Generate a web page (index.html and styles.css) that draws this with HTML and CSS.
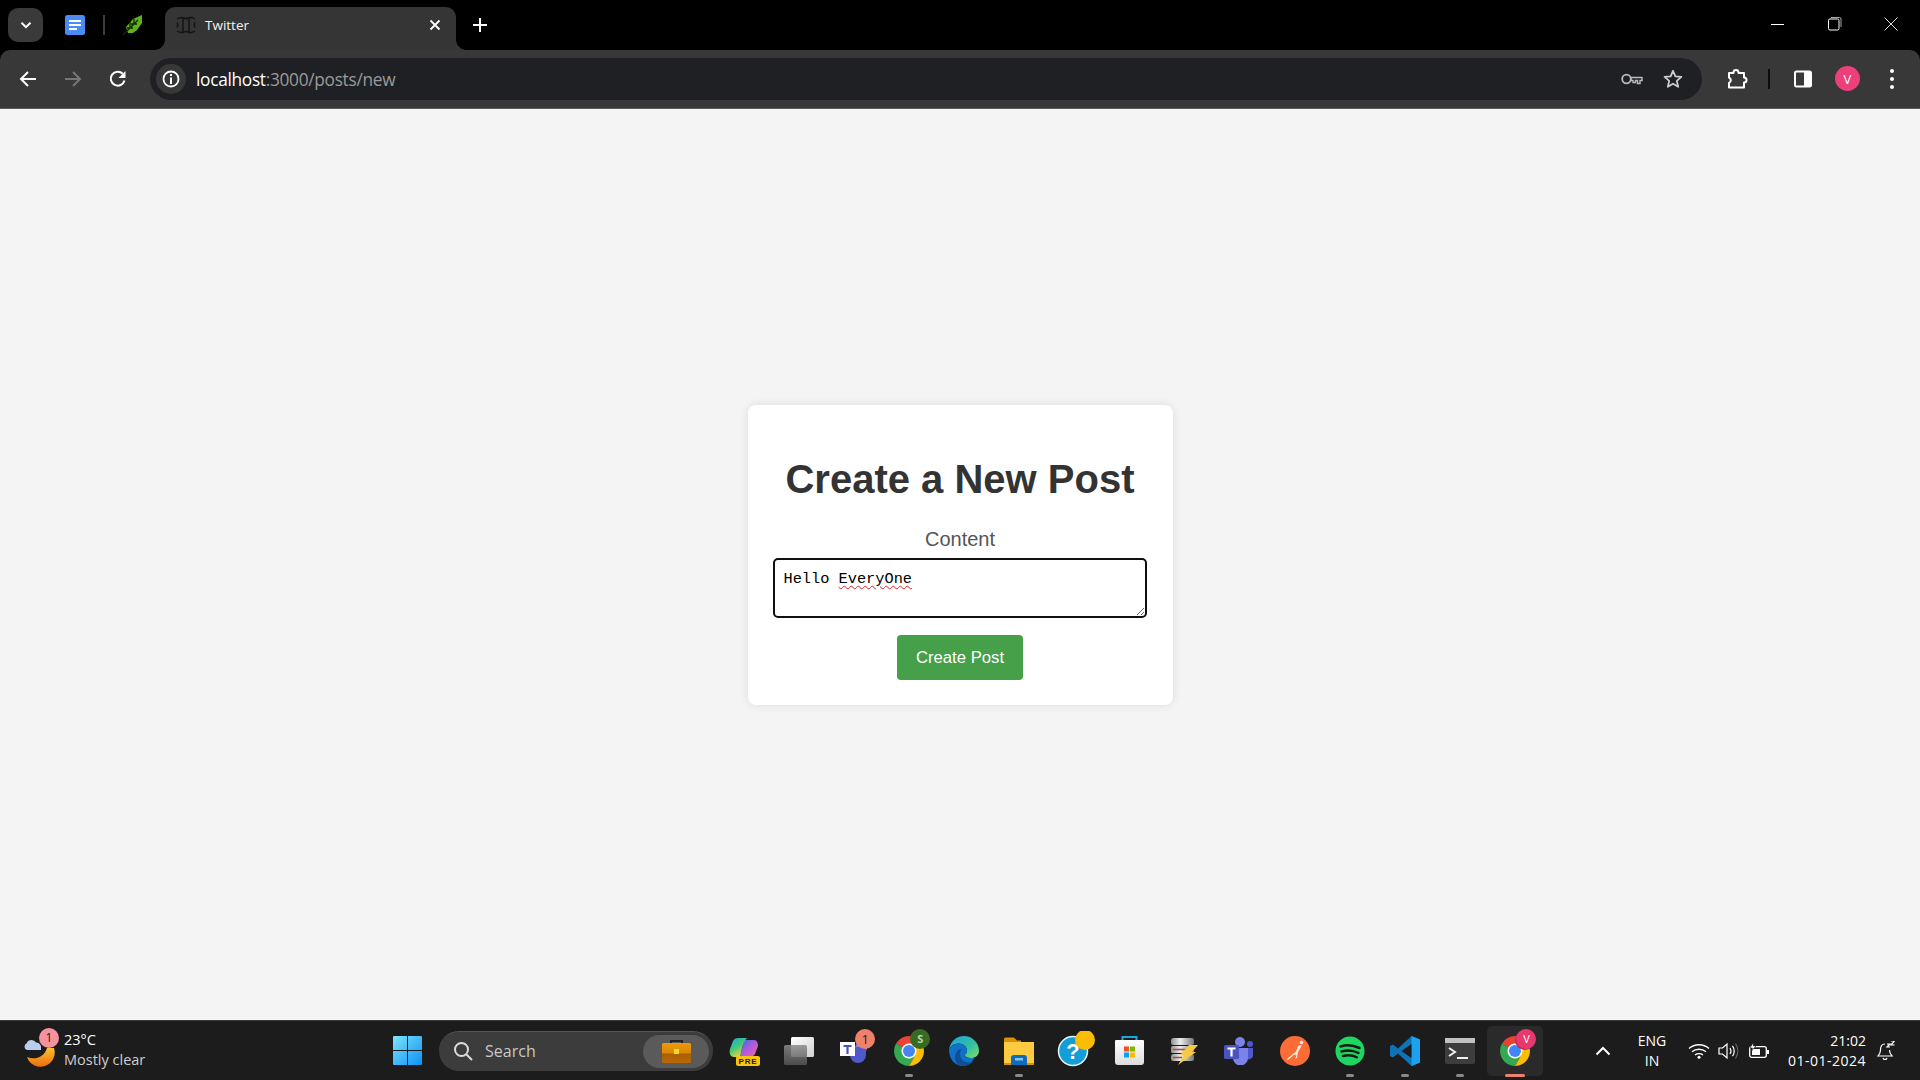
FILE: index.html
```html
<!DOCTYPE html>
<html lang="en">
<head>
  <meta charset="UTF-8">
  <title>Twitter</title>
  <link rel="stylesheet" href="styles.css">
</head>
<body>
  <svg class="defs" width="0" height="0">
    <symbol id="chrome" viewBox="0 0 48 48">
      <circle cx="24" cy="24" r="11" fill="#fff"/>
      <path fill="#ea4335" d="M6.68 14A20 20 0 0 1 41.32 14H24a10 10 0 0 0-8.66 5z"/>
      <path fill="#34a853" d="M6.68 14A20 20 0 0 0 24 44l8.66-15a10 10 0 0 1-17.32-10z"/>
      <path fill="#fbbc04" d="M41.32 14A20 20 0 0 1 24 44l8.66-15A10 10 0 0 0 24 14z"/>
      <circle cx="24" cy="24" r="8" fill="#4285f4"/>
    </symbol>
  </svg>

  <header class="tabstrip">
    <button class="tab-search">
      <svg width="14" height="14" viewBox="0 0 14 14"><path d="M2.5 4.800 7 9.200l4.500-4.400" fill="none" stroke="#fff" stroke-width="2"/></svg>
    </button>
    <div class="pinned">
      <svg width="20" height="20" viewBox="0 0 20 20">
        <rect width="20" height="20" rx="2.500" fill="#4c8bf5"/>
        <path d="M4 5h12v2H4zM4 9h12v2H4zM4 13h8v2H4z" fill="#fff"/>
      </svg>
    </div>
    <span class="pin-sep"></span>
    <div class="pinned pinned-leaf">
      <svg width="20" height="20" viewBox="0 0 20 20">
        <path d="M3 12 10 4l9-4v8l-5 7-4 3H5z" fill="#5fb21a"/>
        <path d="M0 20 15 5M7 7v6M11 4v5M4 13h6M8 9h6" stroke="#12290a" stroke-width="1.300" fill="none"/>
      </svg>
    </div>
    <div class="tab">
      <svg class="favicon" width="20" height="18" viewBox="0 0 20 18">
        <path d="M1 3c3-2 5-2 7-1 1 .5 3 .5 4 0 2-1 4-1 7 1M1 15c3 2 5 2 7 1 1-.5 3-.5 4 0 2 1 4 1 7-1M1 6.500c1 1 1 4 0 5M19 6.500c-1 1-1 4 0 5M7 2v14M13 2v14" fill="none" stroke="#141414" stroke-width="1.500"/>
      </svg>
      <span class="tab-title">Twitter</span>
      <svg class="tab-close" width="12" height="12" viewBox="0 0 12 12"><path d="M1.500 1.500l9 9m0-9l-9 9" stroke="#fff" stroke-width="1.800"/></svg>
    </div>
    <svg class="new-tab" width="14" height="14" viewBox="0 0 14 14"><path d="M7 0v14M0 7h14" stroke="#fff" stroke-width="2"/></svg>
    <div class="window-controls">
      <svg width="14" height="14" viewBox="0 0 14 14"><path d="M0 7.500h13" stroke="#fff"/></svg>
      <svg width="14" height="14" viewBox="0 0 14 14"><rect x=".5" y="2" width="10.500" height="11" rx="1.500" fill="none" stroke="#fff"/><path d="M3 .5h8.500a1.500 1.500 0 0 1 1.500 1.500v8" fill="none" stroke="#aaa"/></svg>
      <svg width="14" height="14" viewBox="0 0 14 14"><path d="M.5.500l13 13m0-13l-13 13" stroke="#ddd"/></svg>
    </div>
  </header>

  <nav class="toolbar">
    <svg class="nav-btn" width="18" height="18" viewBox="0 0 18 18"><path d="M17 9H2.500M9 2 2 9l7 7" fill="none" stroke="#fff" stroke-width="2"/></svg>
    <svg class="nav-btn" width="18" height="18" viewBox="0 0 18 18"><path d="M1 9h14.500M9 2l7 7-7 7" fill="none" stroke="#777" stroke-width="2"/></svg>
    <svg class="nav-btn" width="18" height="18" viewBox="0 0 18 18"><path d="M15.500 10.500A7 7 0 1 1 13.800 3.800" fill="none" stroke="#fff" stroke-width="2"/><path d="M16.500 1v7h-7z" fill="#fff"/></svg>
    <div class="omnibox">
      <span class="site-info">
        <svg width="18" height="18" viewBox="0 0 18 18"><circle cx="9" cy="9" r="7.500" fill="none" stroke="#fff" stroke-width="1.800"/><path d="M8 4h2v2H8zM8 7.500h2V14H8z" fill="#fff"/></svg>
      </span>
      <span class="url"><b>localhost</b>:3000/posts/new</span>
      <svg class="key" width="22" height="14" viewBox="0 0 22 14"><circle cx="5.500" cy="7" r="4.300" fill="none" stroke="#bbb" stroke-width="1.800"/><path d="M10 5.500h11v3h-2v3h-2.500v-3h-2v2H12v-2h-2z" fill="none" stroke="#bbb" stroke-width="1.400"/></svg>
      <svg class="star" width="20" height="20" viewBox="0 0 20 20"><path d="M10 1.800l2.400 5.600 6 .5-4.600 4 1.400 5.900L10 14.700l-5.200 3.100 1.400-5.900-4.600-4 6-.5z" fill="none" stroke="#ccc" stroke-width="1.800" stroke-linejoin="round"/></svg>
    </div>
    <svg class="ext" width="22" height="22" viewBox="0 0 22 22"><path d="M2 5.500h4.500a2.200 2.200 0 0 1 0-.5 2.500 2.500 0 0 1 5 0v.5H17V10a2.500 2.500 0 0 1 0 5v5H2v-4.500a3 3 0 0 0 0-5.500z" transform="translate(1 -.5)" fill="none" stroke="#fff" stroke-width="2" stroke-linejoin="round"/></svg>
    <span class="tool-sep"></span>
    <svg class="panel" width="18" height="18" viewBox="0 0 18 18"><rect x="1" y="1.500" width="16" height="15" rx="1.500" fill="#383838" stroke="#fff" stroke-width="2"/><rect x="10" y="2" width="7" height="14" fill="#fff"/></svg>
    <span class="avatar">V</span>
    <span class="menu-dots"><i></i><i></i><i></i></span>
  </nav>

  <main class="page">
    <form class="post-form">
      <h1>Create a New Post</h1>
      <label class="field-label">Content</label>
      <div class="content-input">Hello <span class="misspelt">EveryOne</span></div>
      <button class="submit-btn" type="button">Create Post</button>
    </form>
  </main>

  <footer class="taskbar">
    <div class="weather">
      <div class="weather-icon">
        <svg width="32" height="34" viewBox="0 0 32 34">
          <defs><linearGradient id="moon" x1="0" y1="0" x2="0" y2="1"><stop offset="0" stop-color="#fbc02d"/><stop offset="1" stop-color="#ee6c12"/></linearGradient></defs>
          <path d="M30 14A14 14 0 0 1 3 23c7 3 17 1 20-9z" fill="url(#moon)"/>
          <path d="M3 16a3.500 3.500 0 0 1-.5-6.500C4 5 10 5 12 8.500c3 0 4.500 2 5 4v3.500z" fill="#b9cdf0"/>
        </svg>
        <span class="weather-badge">1</span>
      </div>
      <div class="weather-text">
        <span class="temp">23°C</span>
        <span class="cond">Mostly clear</span>
      </div>
    </div>

    <div class="tile">
      <svg width="29" height="29" viewBox="0 0 29 29">
        <defs><linearGradient id="winlogo" x1="0" y1="0" x2="1" y2="1"><stop offset="0" stop-color="#7fe5fb"/><stop offset="1" stop-color="#0c8ff5"/></linearGradient></defs>
        <path d="M1 0h13v14H0V1a1 1 0 0 1 1-1zM15 0h13a1 1 0 0 1 1 1v13H15zM0 15h14v14H1a1 1 0 0 1-1-1zM15 15h14v13a1 1 0 0 1-1 1H15z" fill="url(#winlogo)"/>
      </svg>
    </div>

    <div class="search-box">
      <svg width="20" height="20" viewBox="0 0 20 20"><circle cx="8.500" cy="8.500" r="6.500" fill="none" stroke="#ddd" stroke-width="2"/><path d="M13.500 13.500l5.500 5.500" stroke="#ddd" stroke-width="2"/></svg>
      <span class="search-label">Search</span>
      <span class="search-pill">
        <svg width="29" height="24" viewBox="0 0 29 24">
          <defs><linearGradient id="case" x1="0" y1="0" x2="0" y2="1"><stop offset="0" stop-color="#f09a08"/><stop offset=".5" stop-color="#d98606"/><stop offset=".55" stop-color="#a85e04"/><stop offset="1" stop-color="#b96a06"/></linearGradient></defs>
          <path d="M9 4V2h11v2" fill="none" stroke="#222" stroke-width="2"/>
          <rect y="4" width="29" height="20" rx="1.500" fill="url(#case)"/>
          <rect x="12" y="10" width="5" height="5" fill="#f7d92a"/>
        </svg>
      </span>
    </div>

    <div class="task-icons">
      <div class="tile">
        <svg width="32" height="30" viewBox="0 0 32 30">
          <defs>
            <linearGradient id="cop1" x1="0" y1="0" x2=".6" y2="1"><stop offset="0" stop-color="#1fa9e8"/><stop offset=".5" stop-color="#3fc77d"/><stop offset="1" stop-color="#f5d63d"/></linearGradient>
            <linearGradient id="cop2" x1="0" y1="0" x2="1" y2="1"><stop offset="0" stop-color="#2b6fe0"/><stop offset=".5" stop-color="#b25ae0"/><stop offset="1" stop-color="#f0689a"/></linearGradient>
          </defs>
          <path d="M16 4h10c3 0 4 3 4 6l-3 8c-1 2-3 3-6 3h-9z" fill="url(#cop2)"/>
          <path d="M10 2h9c-3 3-4 6-5 10l-2 9H6c-4 0-5-4-4-8L5 5c1-2 3-3 5-3z" fill="url(#cop1)"/>
          <rect x="8" y="20" width="24" height="10" rx="2" fill="#f9c513"/>
          <text x="20" y="28" class="pre-text">PRE</text>
        </svg>
      </div>
      <div class="tile">
        <svg width="30" height="28" viewBox="0 0 30 28">
          <defs>
            <linearGradient id="tv" x1="0" y1="0" x2="1" y2="1"><stop offset="0" stop-color="#fff"/><stop offset="1" stop-color="#d0d0d0"/></linearGradient>
            <linearGradient id="tv2" x1="0" y1="0" x2="0" y2="1"><stop offset="0" stop-color="#8a8a8a"/><stop offset="1" stop-color="#555"/></linearGradient>
          </defs>
          <rect x="7" y="0" width="23" height="20" rx="1.500" fill="url(#tv)"/>
          <rect x="0" y="8" width="23" height="20" rx="1.500" fill="url(#tv2)" fill-opacity=".85"/>
        </svg>
      </div>
      <div class="tile">
        <svg width="28" height="24" viewBox="0 0 28 24">
          <circle cx="21" cy="9" r="6" fill="#7b83eb"/>
          <path d="M10 8h16v8a8 8 0 0 1-16 0z" fill="#5059c9"/>
          <rect y="3" width="15" height="14" fill="#fff"/>
          <path d="M3.500 6h8v2H8.600v7H6.400V8H3.500z" fill="#4b53bc"/>
        </svg>
        <span class="badge badge-teams">1</span>
      </div>
      <div class="tile">
        <svg width="36" height="36"><use href="#chrome"/></svg>
        <span class="badge badge-chrome">S</span>
        <span class="running"></span>
      </div>
      <div class="tile">
        <svg width="30" height="30" viewBox="0 0 30 30">
          <defs>
            <linearGradient id="edge1" x1="0" y1="0" x2="1" y2="1"><stop offset="0" stop-color="#1ba2dd"/><stop offset=".6" stop-color="#35c1a0"/><stop offset="1" stop-color="#7fe05a"/></linearGradient>
          </defs>
          <path d="M15 0a15 15 0 0 1 15 15c0 4.500-4 7-8 7-3 0-6-1-6-3 0-1 2-1.500 2-4.500 0-4-4-7-8-7C6 7.500 1.500 9.500 0 14 1 6 7 0 15 0z" fill="url(#edge1)"/>
          <path d="M0 14c1.500-4.500 6-6.500 10-6.500 4 0 8 3 8 7 0 3-2 3.500-2 4.500 0 2 3 3 6 3 2 0 3-.500 4-1-3 6-7 9-12 9C6 30 0 23 0 14z" fill="#1171c6"/>
          <path d="M13 30C7 29 5 23 6.500 18c1-3 3.500-5 6.500-5.500-3 3-3 10 2.500 13 3 1.500 7 1.500 9-.5-3 3.500-7 5-11.500 5z" fill="#0f4f96"/>
        </svg>
      </div>
      <div class="tile">
        <svg width="30" height="30" viewBox="0 0 30 30">
          <path d="M0 3a1.500 1.500 0 0 1 1.500-1.500H10l3 3h4v4H0z" fill="#d99300"/>
          <path d="M0 6h30v21.500a1.500 1.500 0 0 1-1.500 1.500h-27A1.500 1.500 0 0 1 0 27.500z" fill="#fccb42"/>
          <path d="M0 27h30v.5a1.500 1.500 0 0 1-1.500 1.500h-27A1.500 1.500 0 0 1 0 27.500z" fill="#d99300"/>
          <path d="M7 29v-7a3 3 0 0 1 3-3h10a3 3 0 0 1 3 3v7z" fill="#0f6cbd"/>
          <rect x="11" y="22" width="8" height="2.500" fill="#7fc4f2"/>
        </svg>
        <span class="running"></span>
      </div>
      <div class="tile">
        <svg width="42" height="40" viewBox="0 0 42 40">
          <circle cx="20" cy="20" r="14.500" fill="#139ed8" stroke="#e9f6fb" stroke-width="1.500"/>
          <text x="20" y="28" class="help-text">?</text>
          <circle cx="32" cy="9" r="10" fill="#fbbc04"/>
        </svg>
      </div>
      <div class="tile">
        <svg width="29" height="29" viewBox="0 0 29 29">
          <defs><linearGradient id="bag" x1="0" y1="0" x2="0" y2="1"><stop offset="0" stop-color="#fff"/><stop offset="1" stop-color="#dcdcdc"/></linearGradient></defs>
          <path d="M7.500 5V1h14v4" fill="none" stroke="#1aa5e5" stroke-width="2"/>
          <path d="M1 4h27a1 1 0 0 1 1 1v21a3 3 0 0 1-3 3H3a3 3 0 0 1-3-3V5a1 1 0 0 1 1-1z" fill="url(#bag)"/>
          <rect x="9" y="10.500" width="5" height="5" fill="#f25022"/>
          <rect x="15" y="10.500" width="5" height="5" fill="#7fba00"/>
          <rect x="9" y="16.500" width="5" height="5" fill="#00a4ef"/>
          <rect x="15" y="16.500" width="5" height="5" fill="#ffb900"/>
        </svg>
      </div>
      <div class="tile">
        <svg width="28" height="28" viewBox="0 0 28 28">
          <defs><linearGradient id="drum" x1="0" y1="0" x2="1" y2="0"><stop offset="0" stop-color="#8f8f8f"/><stop offset=".4" stop-color="#eee"/><stop offset="1" stop-color="#777"/></linearGradient></defs>
          <rect x="1" y="1" width="23" height="7" rx="2.500" fill="url(#drum)"/>
          <rect x="1" y="9" width="23" height="7" rx="1.500" fill="url(#drum)"/>
          <rect x="1" y="17" width="23" height="7" rx="2.500" fill="url(#drum)"/>
          <path d="M3 12.500h14M3 20.500h9" stroke="#b5443c" stroke-width="1.500"/>
          <path d="M19 8h9l-6 7h4L8 28l6-10h-4z" fill="#f6c945"/>
        </svg>
      </div>
      <div class="tile">
        <svg width="30" height="28" viewBox="0 0 30 28">
          <circle cx="16" cy="5" r="5" fill="#7b83eb"/>
          <circle cx="26" cy="7" r="3" fill="#5059c9"/>
          <path d="M22 11h7v8a5 5 0 0 1-7 3z" fill="#5059c9"/>
          <path d="M9 11h15v10a7.500 7.500 0 0 1-15 0z" fill="#7b83eb"/>
          <rect y="8" width="15" height="14" rx="1.500" fill="#4b53bc"/>
          <path d="M3.500 10.500h8v2H8.600v7H6.400v-7H3.500z" fill="#fff"/>
        </svg>
      </div>
      <div class="tile">
        <svg width="30" height="30" viewBox="0 0 30 30">
          <circle cx="15" cy="15" r="15" fill="#fc6c36"/>
          <circle cx="21.500" cy="6.500" r="1.800" fill="#fbe6dc"/>
          <path d="M20.500 9c-1.500 0-2.500 1-3 2.500l-1.500 4-8.500 7-1 1.500 2-.5 6-5 2 1-1.500 3.500 2-1 1-6 3-5c.8-1 1-2-.5-2z" fill="#fbe6dc"/>
        </svg>
      </div>
      <div class="tile">
        <svg width="30" height="30" viewBox="0 0 30 30">
          <circle cx="15" cy="15" r="14.500" fill="#1ed760"/>
          <path d="M5.500 10.500c6-1.800 13-1.300 19 1.500M6.500 15.500c5-1.500 12-1 17 1.500M8 20c4.500-1.200 10-.700 14 1.300" fill="none" stroke="#0f1a12" stroke-width="2.500" stroke-linecap="round"/>
        </svg>
        <span class="running"></span>
      </div>
      <div class="tile">
        <svg width="30" height="30" viewBox="0 0 30 30">
          <path d="M21.500 0 30 3.500v23L21.500 30 8 17.500 3 21.500 0 20v-10l3-1.500 5 4z" fill="#0e73b8"/>
          <path d="M21.500 0 30 3.500v23L21.500 30z" fill="#1ba1ee"/>
          <path d="M21.500 8 11.500 15l10 7z" fill="#1c1c1c"/>
        </svg>
        <span class="running"></span>
      </div>
      <div class="tile">
        <svg width="30" height="26" viewBox="0 0 30 26">
          <rect width="30" height="26" rx="2" fill="#3d3d3d"/>
          <rect width="30" height="5" fill="#c2c2c2"/>
          <path d="M4 10l6 4-6 4" fill="none" stroke="#eee" stroke-width="2"/>
          <path d="M12 20h11" stroke="#eee" stroke-width="2"/>
        </svg>
        <span class="running"></span>
      </div>
      <div class="tile tile-active">
        <svg width="36" height="36"><use href="#chrome"/></svg>
        <span class="badge badge-user">V</span>
        <span class="running running-active"></span>
      </div>
    </div>

    <div class="tray">
      <svg class="tray-chevron" width="16" height="10" viewBox="0 0 16 10"><path d="M1.500 8.500 8 2l6.500 6.500" fill="none" stroke="#fff" stroke-width="2"/></svg>
      <div class="tray-lang"><span>ENG</span><span>IN</span></div>
      <svg class="tray-wifi" width="22" height="16" viewBox="0 0 22 16"><path d="M1 5.500c5.500-5 14.500-5 20 0M4 8.800c3.800-3.400 10.200-3.400 14 0M7 12c2.200-1.800 5.800-1.800 8 0" fill="none" stroke="#fff" stroke-width="1.300"/><circle cx="11" cy="14.300" r="1.500" fill="#fff"/></svg>
      <svg class="tray-vol" width="22" height="18" viewBox="0 0 22 18"><path d="M1 6h3.500L9 2v14l-4.500-4H1z" fill="none" stroke="#fff" stroke-width="1.200"/><path d="M12 6c1.200 1.800 1.200 4.200 0 6M14.500 3.800c2 3 2 7.400 0 10.400" fill="none" stroke="#fff" stroke-width="1.200"/><path d="M17.500 1.500c3 4.500 3 10.500 0 15" fill="none" stroke="#666" stroke-width="1.200"/></svg>
      <svg class="tray-batt" width="20" height="16" viewBox="0 0 20 16"><rect x=".7" y="3.700" width="16.600" height="10.600" rx="2" fill="none" stroke="#fff" stroke-width="1.300"/><rect x="18" y="7" width="2" height="4" fill="#fff"/><path d="M3 12V6h8v6z" fill="#fff"/><path d="M4 0 1 5h2.500l-1 3L7 3H4.500z" fill="#fff" stroke="#1c1c1c" stroke-width=".6"/></svg>
      <div class="tray-clock"><span>21:02</span><span class="date">01-01-2024</span></div>
      <svg class="tray-bell" width="18" height="20" viewBox="0 0 18 20"><path d="M8 3C4.500 3 3.500 6 3.500 9c0 3-1 4.500-2.500 6h14c-1.500-1.500-2.500-3-2.500-6M6 17c.5 2 3.500 2 4 0" fill="none" stroke="#fff" stroke-width="1.200"/><path d="M10 3h3l-3 3h3M14 0h3.500L14 4h3.500" fill="none" stroke="#fff" stroke-width="1.200"/></svg>
    </div>
  </footer>
</body>
</html>
```

FILE: styles.css
```css
* {
  box-sizing: border-box;
}

html, body {
  height: 100%;
}

body {
  margin: 0;
  display: flex;
  flex-direction: column;
  height: 1080px;
  overflow: hidden;
  background: #000;
  font-family: 'Liberation Sans', Arial, sans-serif;
}

.defs {
  position: absolute;
}

/* browser chrome */
.tabstrip {
  height: 50px;
  flex: none;
  display: flex;
  align-items: flex-end;
  background: #000;
  color: #fff;
}

.tab-search {
  width: 35px;
  height: 34px;
  margin: 0 0 8px 8px;
  padding: 0;
  border: 0;
  border-radius: 10px;
  background: #3a3a3a;
  display: flex;
  align-items: center;
  justify-content: center;
}

.pinned {
  width: 20px;
  height: 20px;
  margin-bottom: 15px;
}

.tab-search + .pinned {
  margin-left: 22px;
}

.pin-sep {
  width: 2px;
  height: 20px;
  margin: 0 18px 15px 18px;
  background: #3a3a3a;
}

.tab {
  width: 291px;
  height: 43px;
  margin-left: 22px;
  padding: 0 15px 7px 11px;
  border-radius: 10px 10px 0 0;
  background: #353535;
  display: flex;
  align-items: center;
  position: relative;
}

.tab::before,
.tab::after {
  content: "";
  position: absolute;
  bottom: 0;
  width: 10px;
  height: 10px;
  background: radial-gradient(circle at 0 0, #000 9.500px, #353535 10px);
}

.tab::before {
  left: -10px;
}

.tab::after {
  right: -10px;
  background: radial-gradient(circle at 100% 0, #000 9.500px, #353535 10px);
}

.favicon {
  flex: none;
}

.tab-title {
  margin-left: 9px;
  flex: 1;
  font: 13.500px 'Open Sans', sans-serif;
  color: #f2f2f2;
}

.new-tab {
  margin: 0 0 18px 17px;
}

.window-controls {
  margin-left: auto;
  height: 50px;
  padding: 0 22px 3px 0;
  display: flex;
  align-items: center;
  gap: 42.500px;
}

.toolbar {
  height: 59px;
  flex: none;
  padding: 0 18px 1px 19px;
  display: flex;
  align-items: center;
  background: #383838;
  border-bottom: 1px solid #5c5c5c;
  border-radius: 10px 10px 0 0;
}

.nav-btn {
  margin-right: 27px;
  flex: none;
}

.nav-btn:nth-of-type(3) {
  margin-right: 23px;
}

.omnibox {
  width: 1552px;
  height: 42px;
  flex: none;
  padding: 0 19px 0 6px;
  border-radius: 21px;
  background: #1f2023;
  display: flex;
  align-items: center;
}

.site-info {
  width: 30px;
  height: 30px;
  border-radius: 50%;
  background: #383838;
  display: flex;
  align-items: center;
  justify-content: center;
}

.url {
  margin-left: 10px;
  padding-top: 2px;
  flex: 1;
  font: 17.300px 'Open Sans', sans-serif;
  letter-spacing: -0.3px;
  color: #9a9a9a;
}

.url b {
  font-weight: 400;
  color: #fff;
}

.star {
  margin-left: 20px;
}

.ext {
  margin-left: 24px;
}

.tool-sep {
  width: 2px;
  height: 20px;
  margin: 0 24px 0 20px;
  background: #0c0c0c;
}

.avatar {
  width: 25px;
  height: 25px;
  margin-left: 23px;
  border-radius: 50%;
  background: #ec407a;
  color: #fff;
  font: 13px 'Open Sans', sans-serif;
  display: flex;
  align-items: center;
  justify-content: center;
}

.menu-dots {
  margin-left: 30px;
  display: flex;
  flex-direction: column;
  gap: 4px;
}

.menu-dots i {
  width: 4px;
  height: 4px;
  border-radius: 50%;
  background: #fff;
}

/* page */
.page {
  flex: 1;
  padding-bottom: 19px;
  background: #f4f4f4;
  display: flex;
  align-items: center;
  justify-content: center;
}

.post-form {
  width: 425px;
  height: 300px;
  padding: 25px;
  border-radius: 8px;
  background: #fff;
  box-shadow: 0 0 10px rgba(0, 0, 0, 0.1);
  text-align: center;
}

h1 {
  margin: 26px 0 26px;
  font-size: 40px;
  line-height: 46px;
  color: #333;
}

.field-label {
  display: block;
  margin-bottom: 7px;
  font-size: 20px;
  line-height: 23px;
  color: #555;
}

.content-input {
  width: 374px;
  height: 60px;
  padding: 11px 9px;
  border: 2px solid #101010;
  border-radius: 5px;
  font: 15.300px/17px 'Liberation Mono', monospace;
  color: #000;
  text-align: left;
  overflow: auto;
  resize: both;
}

.misspelt {
  text-decoration: underline wavy #e8202a 1px;
  text-underline-offset: 2px;
}

.submit-btn {
  width: 126px;
  height: 45px;
  margin: 17px auto 0;
  display: block;
  border: 0;
  border-radius: 4px;
  background: #45a049;
  color: #fff;
  font: 16.700px 'Liberation Sans', Arial, sans-serif;
}

/* windows taskbar */
.taskbar {
  height: 60px;
  flex: none;
  display: flex;
  align-items: center;
  background: #1c1c1c;
  border-top: 1px solid #3a3a3a;
  color: #fff;
  font-family: 'Open Sans', sans-serif;
}

.weather {
  width: 380px;
  padding-left: 24px;
  display: flex;
  align-items: center;
}

.weather-icon {
  width: 32px;
  height: 34px;
  position: relative;
}

.weather-badge {
  position: absolute;
  top: -6px;
  right: -3px;
  width: 20px;
  height: 20px;
  border-radius: 50%;
  background: #f4929e;
  color: #1c1c1c;
  font-size: 12px;
  line-height: 20px;
  text-align: center;
}

.weather-text {
  margin-left: 8px;
  margin-top: -2px;
  display: flex;
  flex-direction: column;
  font-size: 14.500px;
  line-height: 20px;
}

.cond {
  color: #cfcfcf;
}

.tile {
  width: 55.100px;
  height: 50px;
  flex: none;
  display: flex;
  align-items: center;
  justify-content: center;
  position: relative;
}

.search-box {
  width: 274px;
  height: 40px;
  margin-left: 4px;
  padding: 0 4px 0 14px;
  flex: none;
  border-radius: 20px;
  background: #3c3c3c;
  border-top: 1px solid #565656;
  display: flex;
  align-items: center;
}

.search-label {
  margin-left: 12px;
  flex: 1;
  font-size: 16px;
  color: #c8c8c8;
}

.search-pill {
  width: 66px;
  height: 33px;
  border-radius: 17px;
  background: #5a5a5a;
  display: flex;
  align-items: center;
  justify-content: center;
}

.task-icons {
  margin-left: 3px;
  display: flex;
}

.badge {
  position: absolute;
  width: 20px;
  height: 20px;
  top: 3px;
  left: 29px;
  border-radius: 50%;
  font-size: 13px;
  line-height: 20px;
  text-align: center;
}

.badge-teams {
  background: #f0806a;
  color: #222;
}

.badge-chrome {
  background: #3a6b25;
  color: #b9d8a8;
  font-weight: 700;
  font-size: 11px;
}

.badge-user {
  background: #e8396f;
  color: #fff;
  font-size: 11px;
  box-shadow: -1px 1px 0 #b52a55;
}

.running {
  position: absolute;
  left: 50%;
  bottom: -1px;
  width: 8px;
  height: 3px;
  margin-left: -4px;
  border-radius: 2px;
  background: #8a8a8a;
}

.tile-active {
  border-radius: 5px;
  background: #2a2a2a;
}

.running-active {
  width: 20px;
  margin-left: -10px;
  background: #f0806a;
}

.pre-text {
  font: 700 8px 'Liberation Sans', sans-serif;
  letter-spacing: 0.8px;
  text-anchor: middle;
  fill: #1c1c1c;
}

.help-text {
  font: 700 22px 'Liberation Sans', sans-serif;
  text-anchor: middle;
  fill: #fff;
}

.tray {
  margin-left: auto;
  height: 100%;
  padding-right: 25px;
  display: flex;
  align-items: center;
  font-size: 14px;
  position: relative;
}

.tray-lang {
  width: 34px;
  margin-left: 24px;
  display: flex;
  flex-direction: column;
  align-items: center;
  line-height: 20px;
}

.tray-wifi {
  margin-left: 19px;
}

.tray-vol {
  margin-left: 8px;
}

.tray-batt {
  margin-left: 9px;
}

.tray-clock {
  width: 90px;
  margin-left: 7px;
  display: flex;
  flex-direction: column;
  align-items: flex-end;
  line-height: 20px;
}

.date {
  letter-spacing: 0.5px;
}

.tray-bell {
  margin-left: 11px;
}
```
